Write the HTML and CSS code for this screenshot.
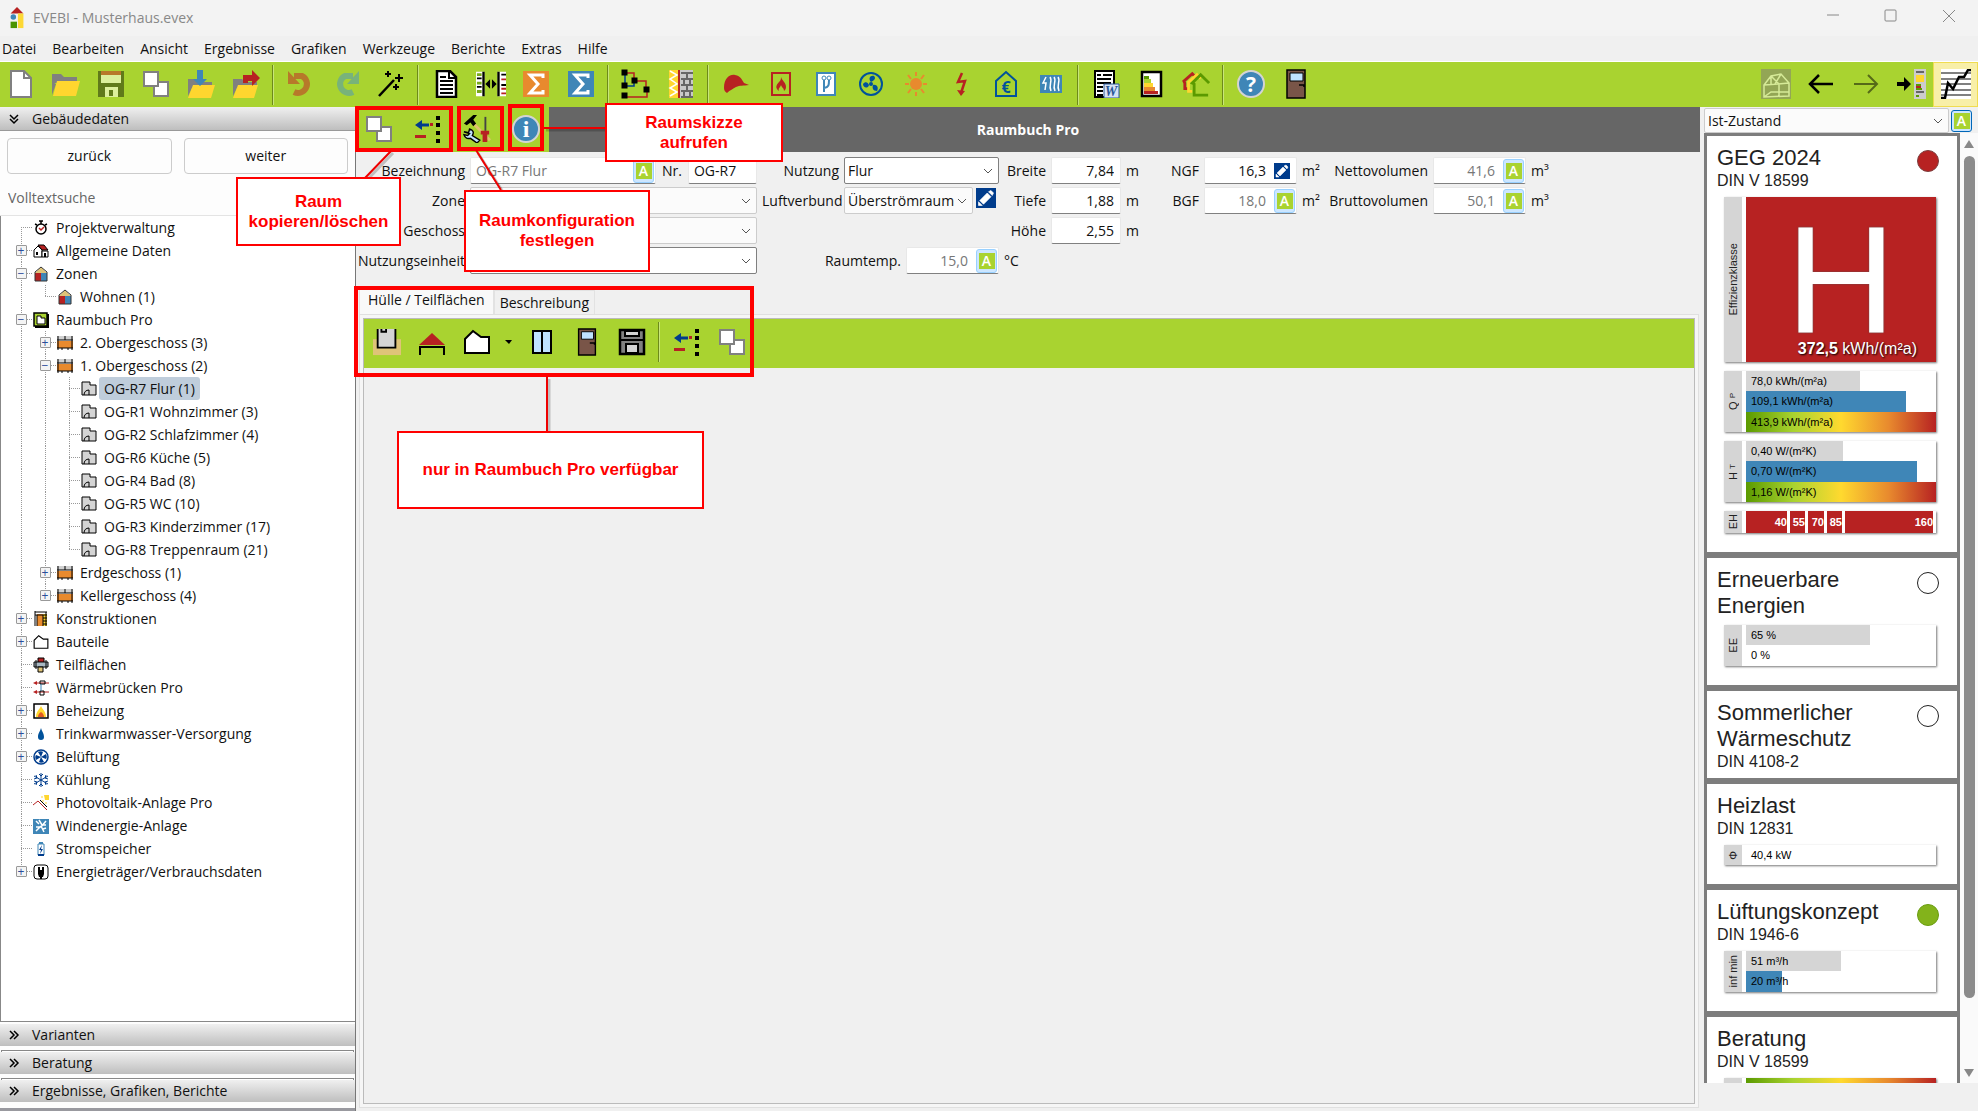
FILE: index.html
```html
<!DOCTYPE html>
<html lang="de">
<head>
    <meta charset="UTF-8">
    <meta name="viewport" content="width=device-width, initial-scale=1.0">
    <title>EVEBI - Musterhaus.evex</title>
    <link rel="stylesheet" href="styles.css">
</head>
<body>
    <!-- Symbole -->
    <svg class="sprite" aria-hidden="true">
        <symbol id="i-app" viewBox="0 0 16 24"><path d="M8 0l7 7H1z" fill="#b72222"/><path d="M9 7h6v16H9z" fill="#fdd835"/><circle cx="4" cy="11" r="3" fill="#3f86b7"/><path d="M1 16h7v7H1z" fill="#4b9400"/></symbol>
        <symbol id="i-new" viewBox="0 0 28 28"><path d="M4 1h13l7 7v19H4z" fill="#fff" stroke="#808080" stroke-width="2"/><path d="M17 1v7h7" fill="none" stroke="#808080" stroke-width="2"/></symbol>
        <symbol id="i-open" viewBox="0 0 28 28"><path d="M0 4h9l3 3h13v6H0z" fill="#808080"/><path d="M0 4v21l4-11h-1z" fill="#808080"/><path d="M5 11h23l-4 15H1z" fill="#ffd62f"/></symbol>
        <symbol id="i-save" viewBox="0 0 28 28"><path d="M1 1h26v26H1z" fill="#607a1a"/><path d="M4 1h20v4H4z" fill="#b7792a"/><path d="M4 5h20v8H4z" fill="#dcef9c"/><path d="M8 17h13v10H8z" fill="#dcef9c"/><path d="M12 20h4v6h-4z" fill="#607a1a"/></symbol>
        <symbol id="i-copy" viewBox="0 0 28 28"><path d="M12 12h14v14H12z" fill="#fff" stroke="#808080" stroke-width="2"/><path d="M2 2h14v14H2z" fill="#fff" stroke="#808080" stroke-width="2"/></symbol>
        <symbol id="i-import" viewBox="0 0 28 28"><path d="M1 9h9l3 3h12v6H1z" fill="#808080"/><path d="M1 9v17l5-10z" fill="#808080"/><path d="M6 15h22l-4 13H1z" fill="#ffd62f"/><path d="M10 0h6v9h4l-7 7-7-7h4z" fill="#3f86b7"/></symbol>
        <symbol id="i-export" viewBox="0 0 28 28"><path d="M1 9h9l3 3h12v6H1z" fill="#808080"/><path d="M1 9v17l5-10z" fill="#808080"/><path d="M6 15h20l-4 13H1z" fill="#ffd62f"/><path d="M11 13V5h9V0l8 8-8 8v-5h-4v2z" fill="#b72222"/></symbol>
        <symbol id="i-undo" viewBox="0 0 28 28"><path d="M7 6h8a8 8 0 1 1-8 16" fill="none" stroke="#b7792a" stroke-width="6"/><path d="M1 1v13h12z" fill="#b7792a"/></symbol>
        <symbol id="i-redo" viewBox="0 0 28 28"><path d="M21 6h-8a8 8 0 1 0 8 16" fill="none" stroke="#78b37a" stroke-width="6"/><path d="M27 1v13H15z" fill="#78b37a"/></symbol>
        <symbol id="i-wand" viewBox="0 0 28 28"><path d="M2 26L17 10" stroke="#000" stroke-width="2.5"/><path d="M11 1v6M8 4h6M22 4v8M18 8h8M19 14v6M16 17h6" stroke="#000" stroke-width="2"/></symbol>
        <symbol id="i-doc" viewBox="0 0 28 28"><path d="M5 1h13l6 6v20H5z" fill="#fff" stroke="#000" stroke-width="2.5"/><path d="M17 1v7h7M8 7h6M8 11h13M8 15h13M8 19h13M8 23h13" fill="none" stroke="#000" stroke-width="2"/></symbol>
        <symbol id="i-compare" viewBox="0 0 32 28"><path d="M0 1h9v26H0zM23 1h9v26h-9z" fill="#fff"/><path d="M8 1v26M24 1v26" stroke="#000" stroke-width="2.5"/><path d="M1 4h5M1 13h5M1 22h5" stroke="#78a81c" stroke-width="3"/><path d="M1 8h5M1 17h5M27 4h5M27 15h5" stroke="#000" stroke-width="2"/><path d="M27 9h5M27 19h5M27 24h5" stroke="#b72222" stroke-width="2"/><path d="M15 9v10l-5-5zM17 9v10l5-5z"/></symbol>
        <symbol id="i-sum-o" viewBox="0 0 28 28"><path d="M1 1h26v26H1z" fill="#e88a2e"/><path d="M21 8V5H8l8 9-8 9h13v-3" fill="none" stroke="#fff" stroke-width="3"/></symbol>
        <symbol id="i-sum-b" viewBox="0 0 28 28"><path d="M1 1h26v26H1z" fill="#3f86b7"/><path d="M21 8V5H8l8 9-8 9h13v-3" fill="none" stroke="#fff" stroke-width="3"/></symbol>
        <symbol id="i-tree" viewBox="0 0 30 30"><path d="M6 4h7v8h12v8" fill="none" stroke="#b72222" stroke-width="1.5"/><path d="M4 5v10M6 17h7v-4" fill="none" stroke="#003c8c" stroke-width="1.5"/><path d="M5 28h21v-6" fill="none" stroke="#b72222" stroke-width="1.5"/><g fill="#fff" stroke="#000" stroke-width="3"><path d="M2 2h3v3H2zM2 15h3v3H2zM2 25h3v3H2zM12 10h3v3h-3zM24 19h3v3h-3z"/></g></symbol>
        <symbol id="i-wall" viewBox="0 0 24 28"><path d="M0 0h24v28H0z" fill="#c9c9c9"/><path d="M0 0h9v28H0z" fill="#ffd62f"/><path d="M1 1l7 4-7 4 7 5-7 4 7 4-7 4" fill="none" stroke="#fff" stroke-width="1.5"/><path d="M10 0v28" stroke="#b72222" stroke-width="2"/><path d="M12 3h12M12 9h12M12 15h12M12 21h12M12 27h12M18 3v6M15 9v6M21 9v6M18 15v6M15 21v6M21 21v6" stroke="#666" stroke-width="2"/></symbol>
        <symbol id="i-cap" viewBox="0 0 28 28"><path d="M2 18C2 8 8 4 13 5c6 1 7 5 9 8l5 2c-6 1-9 0-13 2-3 2-6 3-9 6-2-1-3-3-3-5z" fill="#b72222"/></symbol>
        <symbol id="i-fire" viewBox="0 0 28 28"><path d="M5 3h18v22H5z" fill="none" stroke="#b72222" stroke-width="2"/><path d="M14 7c1 4 5 5 5 10 0 2-1 3-2 4 0-3-2-3-3-6-1 3-3 3-2 6-4-3-3-6 0-9 2-2 2-3 2-5z" fill="#b72222"/></symbol>
        <symbol id="i-pipe" viewBox="0 0 28 28"><path d="M5 3h18v22H5z" fill="#fff" stroke="#3f86b7" stroke-width="2"/><path d="M12 22V10M12 18c5-1 5-3 5-8" fill="none" stroke="#3f86b7" stroke-width="2"/><circle cx="12" cy="8" r="2" fill="#fff" stroke="#3f86b7"/><circle cx="17" cy="8" r="2" fill="#fff" stroke="#3f86b7"/></symbol>
        <symbol id="i-fan" viewBox="0 0 28 28"><circle cx="14" cy="14" r="11" fill="none" stroke="#00529b" stroke-width="2"/><circle cx="14" cy="14" r="2" fill="#00529b"/><path d="M14 12c-3-3-1-7 3-6 2 2 1 4-3 6zM12 15c-1 4-6 3-6-1 2-3 5-2 6 1zM16 15c4-1 6 3 4 6-4 0-5-3-4-6z" fill="#00529b"/></symbol>
        <symbol id="i-sun" viewBox="0 0 28 28"><circle cx="14" cy="14" r="6" fill="#e88a2e"/><path d="M14 2v4M14 22v4M3 14h4M21 14h4M6 5l3 4M22 5l-3 4M6 23l3-4M22 23l-3-4" stroke="#e88a2e" stroke-width="2"/></symbol>
        <symbol id="i-bolt" viewBox="0 0 28 28"><path d="M15 3l-4 9 7-1-4 12" fill="none" stroke="#b72222" stroke-width="2.5"/><path d="M10 20l8 1-4 5z" fill="#b72222"/></symbol>
        <symbol id="i-heater" viewBox="0 0 28 28"><path d="M3 5h22v18H3z" fill="#3f86b7"/><path d="M9 7l-3 6h3l-1 7M13 7c3 4-2 8 1 14M17 7c3 4-2 8 1 14M21 7c3 4-2 8 1 14" fill="none" stroke="#fff" stroke-width="1.5"/></symbol>
        <symbol id="i-energy" viewBox="0 0 28 28"><path d="M5 2h19v24H5z" fill="#fff" stroke="#000" stroke-width="2.5"/><path d="M7 6h5v3H7z" fill="#5b9a00"/><path d="M7 9h7v4H7z" fill="#a9d330"/><path d="M7 13h9v4H7z" fill="#ffd62f"/><path d="M7 17h11v4H7z" fill="#e88a2e"/><path d="M7 21h14v3H7z" fill="#b72222"/></symbol>
        <symbol id="i-houses" viewBox="0 0 30 28"><g fill="none" stroke-width="3"><path d="M8 19H3v-6L2 11l9-8 4 4" stroke="#b72222"/><path d="M11 22H7V12l9-8 4 4" stroke="#ffd62f"/><path d="M29 13L20 4l-9 9 2 1v12h15" stroke="#5b9a00"/></g></symbol>
        <symbol id="i-door" viewBox="0 0 28 30"><path d="M5 1h18v28H5z" fill="#795548" stroke="#000" stroke-width="1.5"/><path d="M8 4h13v8H8z" fill="#bfe2ff" stroke="#000"/><path d="M17 16h5v2" fill="none" stroke="#000" stroke-width="1.5"/></symbol>
        <symbol id="i-3d" viewBox="0 0 30 30"><path d="M0 0h30v30H0z" fill="#93a655"/><path d="M3 28V16l7-9 10-2 8 9v13zM3 16l14-1 11-1M10 7l8 8v12M10 7v8M3 28l7-5h18M20 5l-6 10" fill="none" stroke="#d6ea98" stroke-width="1.5"/></symbol>
        <symbol id="i-left" viewBox="0 0 28 28"><path d="M26 14H4M12 5l-9 9 9 9" fill="none" stroke="#000" stroke-width="2.5"/></symbol>
        <symbol id="i-right" viewBox="0 0 28 28"><path d="M2 14h22M16 5l9 9-9 9" fill="none" stroke="#556a18" stroke-width="2"/></symbol>
        <symbol id="i-panel" viewBox="0 0 30 30"><path d="M1 13h7V8l7 7-7 7v-5H1z"/><path d="M18 0h12v30H18z" fill="#ccc"/><path d="M20 2h8v2h-8z" fill="#666"/><path d="M20 6h8v7h-8z" fill="#ffd62f"/><path d="M20 15h5v2h-5zM20 19h6v2h-6zM20 26h3v2h-3z" fill="#5b9a00"/><path d="M20 17h5v2h-5z" fill="#b72222"/><path d="M20 22h8v2h-8z" fill="#666"/></symbol>
        <symbol id="i-chart" viewBox="0 0 30 30"><path d="M0 0h30v30H0z" fill="#fff"/><path d="M0 4h30M0 10h30M0 15h30M0 21h30M0 26h30" stroke="#808080" stroke-width="2"/><path d="M0 29h4l3-15 5 6 6-12h5l4-7h3" fill="none" stroke="#000" stroke-width="2.5"/></symbol>
        <symbol id="i-delete" viewBox="0 0 28 28"><path d="M7 10h8" stroke="#003c8c" stroke-width="3"/><path d="M1 10l7-5v10z" fill="#003c8c"/><path d="M16 8h3v3h-3z" fill="#b72222"/><path d="M1 20h11v3H1z" fill="#b72222"/><path d="M22 1h4v4h-4zM22 8h4v4h-4zM22 16h4v4h-4zM22 24h4v4h-4z"/></symbol>
        <symbol id="i-tools" viewBox="0 0 30 30"><path d="M10 8l19 19" stroke="#e0c070" stroke-width="3"/><path d="M1 9l10-9h4l-4 5 3 4-3 3-3-4-4 3z"/><path d="M24 2v15" stroke="#444" stroke-width="2"/><path d="M19 17h9v4h-2v8h-5v-8h-2z" fill="#b72222"/><path d="M1 18l5 1 1-4c4 1 5 4 3 7l8 5-3 3-7-5c-4 1-6-1-7-4l4 1 2-2z" fill="#bfe2ff" stroke="#000" stroke-width="1.5"/></symbol>
        <symbol id="i-basement" viewBox="0 0 30 30"><path d="M0 12h30v17H0z" fill="#dfc478"/><path d="M5 1h19v20H5z" fill="#d4d4d4"/><path d="M5 1v20h19V1M9 1v3h5V1" fill="none" stroke="#000" stroke-width="2"/></symbol>
        <symbol id="i-roof" viewBox="0 0 28 28"><path d="M14 5l13 12H1z" fill="#b72222"/><path d="M2 27v-8h24v8" fill="none" stroke="#000" stroke-width="2"/></symbol>
        <symbol id="i-outer" viewBox="0 0 28 28"><path d="M2 25V11l8-8 8 6h8v16z" fill="#fff" stroke="#000" stroke-width="2"/></symbol>
        <symbol id="i-window" viewBox="0 0 28 28"><path d="M5 3h18v22H5z" fill="#bfe2ff" stroke="#000" stroke-width="2"/><path d="M14 3v22" stroke="#000" stroke-width="2"/></symbol>
        <symbol id="i-floppy" viewBox="0 0 28 28"><path d="M2 2h24v24H2z" fill="#808080" stroke="#000" stroke-width="2.5"/><path d="M7 3h14v5H7z" fill="#d4d4d4" stroke="#000" stroke-width="2"/><path d="M2 12h24" stroke="#000" stroke-width="2"/><path d="M8 16h12v9H8z" fill="#d4d4d4" stroke="#000" stroke-width="2"/></symbol>

        <symbol id="t-clock" viewBox="0 0 16 16"><circle cx="8" cy="9" r="5" fill="#fff" stroke="#000" stroke-width="1.5"/><path d="M6 1h4M8 1v3M2 4l2 1M14 4l-2 1" stroke="#000" stroke-width="1.5"/><path d="M6 8l2 2 3-3" fill="none" stroke="#b72222" stroke-width="1.5"/></symbol>
        <symbol id="t-house" viewBox="0 0 16 16"><path d="M1 14V7l4-4 4 4v7z" fill="#fff" stroke="#000"/><path d="M5 2h6l4 5H9z" fill="#b72222" stroke="#000"/><path d="M9 14V8h6v6z" fill="#fff" stroke="#000"/><path d="M3 9h2v3H3zM11 10h2v4h-2z"/></symbol>
        <symbol id="t-zone" viewBox="0 0 16 16"><path d="M2 7h6v8H2z" fill="#b72222"/><path d="M8 7h6v8H8z" fill="#3f86b7"/><path d="M2 7l6-6 6 6z" fill="#dfc478"/><path d="M2 15V6l6-5 6 5v9z" fill="none" stroke="#333"/></symbol>
        <symbol id="t-book" viewBox="0 0 16 16"><path d="M2 2h14v14H2z"/><path d="M1 1h13v13H1z" fill="#a9d330" stroke="#000" stroke-width="1.5"/><path d="M4 12V4h4v2h4v6z" fill="#fff" stroke="#000"/></symbol>
        <symbol id="t-floor" viewBox="0 0 16 16"><path d="M0 1h16v4H0z" fill="#d0d0d0"/><path d="M0 6h16v7H0z" fill="#e88a2e"/><path d="M0 5h16M0 13h16M1 1v14M15 1v14M8 1v4M5 13v2M11 13v2" stroke="#000" fill="none"/></symbol>
        <symbol id="t-room" viewBox="0 0 16 16"><path d="M1 14V1h8v3h6v10z" fill="#d4d4d4" stroke="#000"/><path d="M3 14c0-3 2-5 5-5v5" fill="none" stroke="#000"/></symbol>
        <symbol id="t-constr" viewBox="0 0 16 16"><path d="M4 3h6v12H4z" fill="#e88a2e"/><path d="M10 3h4v12h-4z" fill="#ffd62f"/><path d="M2 1h12M2 0v15M4 4v11M10 4v11M13 1v14M2 4h12M10 7h4M10 10h4M10 13h4" stroke="#000" fill="none"/></symbol>
        <symbol id="t-area" viewBox="0 0 16 16"><path d="M5 1h6v5H5z" fill="#b72222" stroke="#000"/><path d="M1 5h14v5H1z" fill="#a9b9c4" stroke="#000"/><path d="M3 3v9M13 3v9" stroke="#000"/><path d="M5 10h5v5H5z" fill="#dfc478" stroke="#000"/></symbol>
        <symbol id="t-bridge" viewBox="0 0 16 16"><path d="M2 3h14M2 12h14" stroke="#b72222"/><path d="M0 3l4-2v4zM0 12l4-2v4z" fill="#b72222"/><path d="M7 1h5v3H7zM7 11h4v4H7z" fill="none" stroke="#000"/><path d="M8 4v7" stroke="#3f86b7"/></symbol>
        <symbol id="t-heat" viewBox="0 0 16 16"><path d="M1 1h14v14H1z" fill="#fff" stroke="#000" stroke-width="1.5"/><path d="M8 3c1 3 5 5 5 11H3c0-6 4-8 5-11z" fill="#ffd62f"/><path d="M8 9c2 1 3 3 3 5H5c0-2 1-4 3-5z" fill="#e05a20"/></symbol>
        <symbol id="t-drop" viewBox="0 0 16 16"><path d="M8 2c1 4 3 5 3 9a3 3 0 0 1-6 0c0-4 2-5 3-9z" fill="#00529b"/></symbol>
        <symbol id="t-fan" viewBox="0 0 16 16"><circle cx="8" cy="8" r="7" fill="#fff" stroke="#003c8c" stroke-width="1.5"/><path d="M8 8L5 3c2-1 4-1 5 0zM8 8l5-3c1 2 1 4 0 5zM8 8l3 5c-2 1-4 1-5 0zM8 8l-5 3c-1-2-1-4 0-5z" fill="#003c8c"/></symbol>
        <symbol id="t-snow" viewBox="0 0 16 16"><path d="M8 1v14M1 4l14 8M15 4L1 12M6 2l2 2 2-2M6 14l2-2 2 2M1 7l3-1-1-3M15 7l-3-1 1-3M1 9l3 1-1 3M15 9l-3 1 1 3" fill="none" stroke="#003c8c"/></symbol>
        <symbol id="t-pv" viewBox="0 0 16 16"><path d="M0 10l5-4 9 9" fill="none" stroke="#b72222"/><path d="M7 5l7 7" stroke="#000"/><path d="M11 0h5v5h-4z" fill="#ffd62f"/><path d="M8 2h2M9 6h2M13 7v2" stroke="#ffd62f"/></symbol>
        <symbol id="t-wind" viewBox="0 0 16 16"><path d="M0 1h16v15H0z" fill="#3f86b7"/><path d="M3 3l3 3M6 2l3 5h4M13 3l-5 6H3M8 8l3 6M3 13l5-5M13 10l-3 1" fill="none" stroke="#fff" stroke-width="1.5"/></symbol>
        <symbol id="t-batt" viewBox="0 0 16 16"><path d="M6 1h4v2H6z" fill="#3f86b7"/><path d="M5 3h6v11H5z" fill="#fff" stroke="#3f86b7"/><path d="M9 4L6 9h2l-1 4 3-5H8z" fill="#003c8c"/><path d="M5 13h6v2H5z" fill="#003c8c"/></symbol>
        <symbol id="t-plug" viewBox="0 0 16 16"><rect x="1" y="1" width="14" height="14" rx="3" fill="#fff" stroke="#000"/><path d="M6 3v3M10 3v3M8 11v4" stroke="#000" stroke-width="2"/><path d="M5 6h6v4l-1 3H6l-1-3z"/></symbol>
        <symbol id="s-chev" viewBox="0 0 12 12"><path d="M2 2l4 4-4 4M6 2l4 4-4 4" fill="none" stroke="#000" stroke-width="1.5"/></symbol>
        <symbol id="s-pen" viewBox="0 0 16 16"><path d="M0 0h16v16H0z" fill="#003c8c"/><path d="M3 10l6-6 3 3-6 6zM10 3l2-1 2 2-1 2zM2 11l3 3-3 0z" fill="#fff" stroke="#fff" stroke-width=".5"/></symbol>
    </svg>

    <header class="titlebar">
        <svg class="app-icon"><use href="#i-app"/></svg>
        <span class="app-title">EVEBI - Musterhaus.evex</span>
        <button class="win-btn" aria-label="Minimieren"><svg viewBox="0 0 14 14"><path d="M1 6h12"/></svg></button>
        <button class="win-btn" aria-label="Maximieren"><svg viewBox="0 0 14 14"><rect x="1" y="1" width="11" height="11" rx="1"/></svg></button>
        <button class="win-btn" aria-label="Schließen"><svg viewBox="0 0 14 14"><path d="M1 1l12 12M13 1L1 13"/></svg></button>
    </header>

    <nav class="menubar">
        <a href="#">Datei</a>
        <a href="#">Bearbeiten</a>
        <a href="#">Ansicht</a>
        <a href="#">Ergebnisse</a>
        <a href="#">Grafiken</a>
        <a href="#">Werkzeuge</a>
        <a href="#">Berichte</a>
        <a href="#">Extras</a>
        <a href="#">Hilfe</a>
    </nav>

    <div class="toolbar">
        <button aria-label="Neu"><svg><use href="#i-new"/></svg></button>
        <button aria-label="Öffnen"><svg><use href="#i-open"/></svg></button>
        <button aria-label="Speichern"><svg><use href="#i-save"/></svg></button>
        <button aria-label="Kopieren"><svg><use href="#i-copy"/></svg></button>
        <button aria-label="Importieren"><svg><use href="#i-import"/></svg></button>
        <button aria-label="Exportieren"><svg><use href="#i-export"/></svg></button>
        <span class="sep"></span>
        <button aria-label="Rückgängig"><svg><use href="#i-undo"/></svg></button>
        <button aria-label="Wiederholen"><svg><use href="#i-redo"/></svg></button>
        <button aria-label="Assistent"><svg><use href="#i-wand"/></svg></button>
        <span class="sep"></span>
        <button aria-label="Bericht"><svg><use href="#i-doc"/></svg></button>
        <button aria-label="Vergleich"><svg class="wide"><use href="#i-compare"/></svg></button>
        <button aria-label="Summe Varianten"><svg><use href="#i-sum-o"/></svg></button>
        <button aria-label="Summe"><svg><use href="#i-sum-b"/></svg></button>
        <span class="sep"></span>
        <button aria-label="Schema"><svg class="wide"><use href="#i-tree"/></svg></button>
        <button aria-label="Wandaufbau"><svg><use href="#i-wall"/></svg></button>
        <span class="sep"></span>
        <button aria-label="Sanierung"><svg><use href="#i-cap"/></svg></button>
        <button aria-label="Heizung"><svg><use href="#i-fire"/></svg></button>
        <button aria-label="Rohrnetz"><svg><use href="#i-pipe"/></svg></button>
        <button aria-label="Lüftung"><svg><use href="#i-fan"/></svg></button>
        <button aria-label="Solar"><svg><use href="#i-sun"/></svg></button>
        <button aria-label="Strom"><svg><use href="#i-bolt"/></svg></button>
        <button aria-label="Kosten"><svg viewBox="0 0 28 28"><path d="M4 26V11L14 2l10 9v15z" fill="none" stroke="#00529b" stroke-width="2"/><text x="14" y="23" class="glyph-euro">€</text></svg></button>
        <button aria-label="Heizkörper"><svg><use href="#i-heater"/></svg></button>
        <span class="sep"></span>
        <button aria-label="Word-Bericht"><svg viewBox="0 0 28 28"><path d="M3 1h19v26H3z" fill="#fff" stroke="#000" stroke-width="2"/><path d="M5 5h4M11 5h9M5 9h14M5 13h14M5 17h6M5 21h6M5 25h6" stroke="#000" stroke-width="2"/><path d="M12 14h15v14H12z" fill="#d6e2f5" stroke="#2b5797"/><text x="19" y="26" class="glyph-word">W</text></svg></button>
        <button aria-label="Energieausweis"><svg><use href="#i-energy"/></svg></button>
        <button aria-label="Sanierungsfahrplan"><svg><use href="#i-houses"/></svg></button>
        <span class="sep"></span>
        <button aria-label="Hilfe"><svg viewBox="0 0 28 28"><circle cx="14" cy="14" r="13" fill="#3f86b7" stroke="#d4d4d4" stroke-width="2"/><text x="14" y="22" class="glyph-help">?</text></svg></button>
        <button aria-label="Beenden"><svg class="wide"><use href="#i-door"/></svg></button>
        <span class="spacer"></span>
        <button aria-label="3D-Ansicht"><svg class="wide"><use href="#i-3d"/></svg></button>
        <button aria-label="Zurück"><svg><use href="#i-left"/></svg></button>
        <button aria-label="Vor"><svg><use href="#i-right"/></svg></button>
        <button aria-label="Leiste ausblenden"><svg class="wide"><use href="#i-panel"/></svg></button>
        <button class="active" aria-label="Kennwerte"><svg class="wide"><use href="#i-chart"/></svg></button>
    </div>

    <main class="workspace">
        <aside class="left">
            <button class="section-head open"><svg><use href="#s-chev"/></svg>Gebäudedaten</button>
            <div class="nav-buttons">
                <button>zurück</button>
                <button>weiter</button>
            </div>
            <input class="search" type="search" placeholder="Volltextsuche" aria-label="Volltextsuche">

            <ul class="tree">
                <li><i class="g first"></i><svg><use href="#t-clock"/></svg><a href="#">Projektverwaltung</a></li>
                <li><i class="g tee"><button aria-label="Aufklappen">+</button></i><svg><use href="#t-house"/></svg><a href="#">Allgemeine Daten</a></li>
                <li><i class="g tee"><button aria-label="Zuklappen">−</button></i><svg><use href="#t-zone"/></svg><a href="#">Zonen</a></li>
                <li><i class="g line"></i><i class="g end"></i><svg><use href="#t-zone"/></svg><a href="#">Wohnen (1)</a></li>
                <li><i class="g tee"><button aria-label="Zuklappen">−</button></i><svg><use href="#t-book"/></svg><a href="#">Raumbuch Pro</a></li>
                <li><i class="g line"></i><i class="g tee"><button aria-label="Aufklappen">+</button></i><svg><use href="#t-floor"/></svg><a href="#">2. Obergeschoss (3)</a></li>
                <li><i class="g line"></i><i class="g tee"><button aria-label="Zuklappen">−</button></i><svg><use href="#t-floor"/></svg><a href="#">1. Obergeschoss (2)</a></li>
                <li><i class="g line"></i><i class="g line"></i><i class="g tee"></i><svg><use href="#t-room"/></svg><a href="#" class="selected">OG-R7 Flur (1)</a></li>
                <li><i class="g line"></i><i class="g line"></i><i class="g tee"></i><svg><use href="#t-room"/></svg><a href="#">OG-R1 Wohnzimmer (3)</a></li>
                <li><i class="g line"></i><i class="g line"></i><i class="g tee"></i><svg><use href="#t-room"/></svg><a href="#">OG-R2 Schlafzimmer (4)</a></li>
                <li><i class="g line"></i><i class="g line"></i><i class="g tee"></i><svg><use href="#t-room"/></svg><a href="#">OG-R6 Küche (5)</a></li>
                <li><i class="g line"></i><i class="g line"></i><i class="g tee"></i><svg><use href="#t-room"/></svg><a href="#">OG-R4 Bad (8)</a></li>
                <li><i class="g line"></i><i class="g line"></i><i class="g tee"></i><svg><use href="#t-room"/></svg><a href="#">OG-R5 WC (10)</a></li>
                <li><i class="g line"></i><i class="g line"></i><i class="g tee"></i><svg><use href="#t-room"/></svg><a href="#">OG-R3 Kinderzimmer (17)</a></li>
                <li><i class="g line"></i><i class="g line"></i><i class="g end"></i><svg><use href="#t-room"/></svg><a href="#">OG-R8 Treppenraum (21)</a></li>
                <li><i class="g line"></i><i class="g tee"><button aria-label="Aufklappen">+</button></i><svg><use href="#t-floor"/></svg><a href="#">Erdgeschoss (1)</a></li>
                <li><i class="g line"></i><i class="g end"><button aria-label="Aufklappen">+</button></i><svg><use href="#t-floor"/></svg><a href="#">Kellergeschoss (4)</a></li>
                <li><i class="g tee"><button aria-label="Aufklappen">+</button></i><svg><use href="#t-constr"/></svg><a href="#">Konstruktionen</a></li>
                <li><i class="g tee"><button aria-label="Aufklappen">+</button></i><svg><use href="#i-outer"/></svg><a href="#">Bauteile</a></li>
                <li><i class="g tee"></i><svg><use href="#t-area"/></svg><a href="#">Teilflächen</a></li>
                <li><i class="g tee"></i><svg><use href="#t-bridge"/></svg><a href="#">Wärmebrücken Pro</a></li>
                <li><i class="g tee"><button aria-label="Aufklappen">+</button></i><svg><use href="#t-heat"/></svg><a href="#">Beheizung</a></li>
                <li><i class="g tee"><button aria-label="Aufklappen">+</button></i><svg><use href="#t-drop"/></svg><a href="#">Trinkwarmwasser-Versorgung</a></li>
                <li><i class="g tee"><button aria-label="Aufklappen">+</button></i><svg><use href="#t-fan"/></svg><a href="#">Belüftung</a></li>
                <li><i class="g tee"></i><svg><use href="#t-snow"/></svg><a href="#">Kühlung</a></li>
                <li><i class="g tee"></i><svg><use href="#t-pv"/></svg><a href="#">Photovoltaik-Anlage Pro</a></li>
                <li><i class="g tee"></i><svg><use href="#t-wind"/></svg><a href="#">Windenergie-Anlage</a></li>
                <li><i class="g tee"></i><svg><use href="#t-batt"/></svg><a href="#">Stromspeicher</a></li>
                <li><i class="g end"><button aria-label="Aufklappen">+</button></i><svg><use href="#t-plug"/></svg><a href="#">Energieträger/Verbrauchsdaten</a></li>
            </ul>

            <div class="closed-sections">
                <button class="section-head"><svg><use href="#s-chev"/></svg>Varianten</button>
                <button class="section-head"><svg><use href="#s-chev"/></svg>Beratung</button>
                <button class="section-head"><svg><use href="#s-chev"/></svg>Ergebnisse, Grafiken, Berichte</button>
            </div>
        </aside>

        <section class="center">
            <div class="room-bar">
                <div class="room-tools">
                    <button aria-label="Raum kopieren"><svg><use href="#i-copy"/></svg></button>
                    <button aria-label="Raum löschen"><svg><use href="#i-delete"/></svg></button>
                    <button aria-label="Raumkonfiguration"><svg><use href="#i-tools"/></svg></button>
                    <button aria-label="Raumskizze"><svg viewBox="0 0 28 28"><circle cx="14" cy="14" r="13" fill="#3f86b7" stroke="#d4d4d4" stroke-width="2"/><text x="14" y="22" class="glyph-info">i</text></svg></button>
                </div>
                <h1>Raumbuch Pro</h1>
                <div class="room-fill"></div>
            </div>

            <form class="room-form">
                <label for="bez">Bezeichnung</label>
                <div class="name-row">
                    <div class="field auto name"><input id="bez" value="OG-R7 Flur"><button type="button" class="auto-btn"><span>A</span></button></div>
                    <label for="nr">Nr.</label>
                    <div class="field"><input id="nr" value="OG-R7"></div>
                </div>
                <label for="nutzung">Nutzung</label>
                <select id="nutzung" class="strong"><option>Flur</option></select>
                <label for="breite">Breite</label>
                <div class="field num"><input id="breite" value="7,84"></div>
                <span>m</span>
                <label for="ngf">NGF</label>
                <div class="field num"><input id="ngf" value="16,3"><button type="button" class="pen-btn" aria-label="Bearbeiten"><svg><use href="#s-pen"/></svg></button></div>
                <span>m²</span>
                <label for="netto">Nettovolumen</label>
                <div class="field num auto"><input id="netto" value="41,6"><button type="button" class="auto-btn"><span>A</span></button></div>
                <span>m³</span>

                <label for="zone">Zone</label>
                <select id="zone"><option></option></select>
                <label for="luft">Luftverbund</label>
                <div class="luft-row">
                    <select id="luft"><option>Überströmraum</option></select>
                    <button type="button" class="pen-btn big" aria-label="Bearbeiten"><svg><use href="#s-pen"/></svg></button>
                </div>
                <label for="tiefe">Tiefe</label>
                <div class="field num"><input id="tiefe" value="1,88"></div>
                <span>m</span>
                <label for="bgf">BGF</label>
                <div class="field num auto"><input id="bgf" value="18,0"><button type="button" class="auto-btn"><span>A</span></button></div>
                <span>m²</span>
                <label for="brutto">Bruttovolumen</label>
                <div class="field num auto"><input id="brutto" value="50,1"><button type="button" class="auto-btn"><span>A</span></button></div>
                <span>m³</span>

                <label for="geschoss">Geschoss</label>
                <select id="geschoss"><option></option></select>
                <label for="hoehe" class="height-label">Höhe</label>
                <div class="field num"><input id="hoehe" value="2,55"></div>
                <span>m</span>

                <label for="einheit" class="unit-label">Nutzungseinheit</label>
                <select id="einheit" class="strong"><option></option></select>
                <div class="temp-row">
                    <label for="temp">Raumtemp.</label>
                    <div class="field num auto"><input id="temp" value="15,0"><button type="button" class="auto-btn"><span>A</span></button></div>
                </div>
                <span>°C</span>
            </form>

            <div class="tabs">
                <button class="tab current">Hülle / Teilflächen</button>
                <button class="tab">Beschreibung</button>
            </div>
            <div class="tab-pane">
                <div class="tab-inner">
                    <div class="part-tools">
                        <button aria-label="Keller"><svg><use href="#i-basement"/></svg></button>
                        <button aria-label="Dach"><svg><use href="#i-roof"/></svg></button>
                        <button aria-label="Außenwand"><svg><use href="#i-outer"/></svg></button>
                        <button class="drop" aria-label="Weitere"><svg viewBox="0 0 8 8"><path d="M0 2h7L4 6z"/></svg></button>
                        <button aria-label="Fenster"><svg><use href="#i-window"/></svg></button>
                        <button aria-label="Tür"><svg><use href="#i-door"/></svg></button>
                        <button aria-label="Speichern"><svg><use href="#i-floppy"/></svg></button>
                        <span class="sep"></span>
                        <button aria-label="Löschen"><svg><use href="#i-delete"/></svg></button>
                        <button aria-label="Kopieren"><svg><use href="#i-copy"/></svg></button>
                    </div>
                </div>
            </div>
        </section>

        <aside class="right">
            <div class="state-row">
                <select aria-label="Zustand"><option>Ist-Zustand</option></select>
                <button class="auto-btn framed"><span>A</span></button>
            </div>
            <div class="cards-scroll">
                <div class="cards">
                    <section class="card">
                        <span class="dot red"></span>
                        <h2>GEG 2024</h2>
                        <p>DIN V 18599</p>
                        <div class="meter">
                            <div class="meter-label"><span>Effizienzklasse</span></div>
                            <div class="rating"><strong class="letter">H</strong><div class="rating-value"><b>372,5</b> kWh/(m²a)</div></div>
                        </div>
                        <div class="meter">
                            <div class="meter-label"><span>Q <small>P</small></span></div>
                            <div class="bars">
                                <div class="bar grey" style="width: 60%">78,0 kWh/(m²a)</div>
                                <div class="bar blue" style="width: 84%">109,1 kWh/(m²a)</div>
                                <div class="bar scale">413,9 kWh/(m²a)</div>
                            </div>
                        </div>
                        <div class="meter">
                            <div class="meter-label"><span>H <small>T</small></span></div>
                            <div class="bars">
                                <div class="bar grey" style="width: 51%">0,40 W/(m²K)</div>
                                <div class="bar blue" style="width: 90%">0,70 W/(m²K)</div>
                                <div class="bar scale">1,16 W/(m²K)</div>
                            </div>
                        </div>
                        <div class="meter">
                            <div class="meter-label"><span>EH</span></div>
                            <div class="steps">
                                <b style="flex-grow: 41">40</b><b style="flex-grow: 15">55</b><b style="flex-grow: 16">70</b><b style="flex-grow: 15">85</b><b style="flex-grow: 88">160</b>
                            </div>
                        </div>
                    </section>
                    <section class="card">
                        <span class="dot"></span>
                        <h2>Erneuerbare Energien</h2>
                        <div class="meter">
                            <div class="meter-label"><span>EE</span></div>
                            <div class="bars">
                                <div class="bar grey" style="width: 65%">65 %</div>
                                <div class="bar" style="width: 0%">0 %</div>
                            </div>
                        </div>
                    </section>
                    <section class="card plain">
                        <span class="dot"></span>
                        <h2>Sommerlicher Wärmeschutz</h2>
                        <p>DIN 4108-2</p>
                    </section>
                    <section class="card">
                        <h2>Heizlast</h2>
                        <p>DIN 12831</p>
                        <div class="meter">
                            <div class="meter-label"><span>Φ</span></div>
                            <div class="bars"><div class="bar" style="width: 0%">40,4 kW</div></div>
                        </div>
                    </section>
                    <section class="card">
                        <span class="dot green"></span>
                        <h2>Lüftungskonzept</h2>
                        <p>DIN 1946-6</p>
                        <div class="meter">
                            <div class="meter-label"><span>inf min</span></div>
                            <div class="bars">
                                <div class="bar grey" style="width: 50%">51 m³/h</div>
                                <div class="bar blue" style="width: 19%">20 m³/h</div>
                            </div>
                        </div>
                    </section>
                    <section class="card">
                        <h2>Beratung</h2>
                        <p>DIN V 18599</p>
                        <div class="meter">
                            <div class="meter-label"></div>
                            <div class="bars"><div class="bar scale"></div></div>
                        </div>
                    </section>
                </div>
                <div class="scrollbar">
                    <svg viewBox="0 0 12 10"><path d="M6 1l5 8H1z"/></svg>
                    <div class="thumb"></div>
                    <svg viewBox="0 0 12 10"><path d="M6 9l5-8H1z"/></svg>
                </div>
            </div>
        </aside>
    </main>

    <!-- Hinweise über der Oberfläche -->
    <div class="notes">
        <div class="frame frame-copy"></div>
        <div class="frame frame-config"></div>
        <div class="frame frame-sketch"></div>
        <div class="frame frame-parts"></div>
        <svg class="leaders">
            <path class="shade" d="M393 153L367 180M478 153L503 192M546 130H607M549 379V431"/>
            <path d="M391 151L365 178M476 150L501 190M544 128H605M547 376V431"/>
        </svg>
        <div class="note note-copy">Raum<br>kopieren/löschen</div>
        <div class="note note-config">Raumkonfiguration<br>festlegen</div>
        <div class="note note-sketch">Raumskizze<br>aufrufen</div>
        <div class="note note-parts">nur in Raumbuch Pro verfügbar</div>
    </div>
</body>
</html>
```
FILE: styles.css
```css
* {
    margin: 0;
    padding: 0;
    box-sizing: border-box;
}

body {
    height: 100vh;
    display: flex;
    flex-direction: column;
    overflow: hidden;
    background: #f0f0f0;
    color: #111;
    font-family: "Open Sans", "Segoe UI", sans-serif;
    font-size: 14px;
    line-height: 20px;
}

button, input, select {
    font: inherit;
    color: inherit;
    border: none;
    background: none;
}

a {
    color: inherit;
    text-decoration: none;
}

.sprite {
    position: absolute;
    width: 0;
    height: 0;
}

/* Titelleiste und Menü */
.titlebar {
    display: flex;
    align-items: center;
    height: 36px;
    flex-shrink: 0;
    padding-left: 8px;
    background: #f3f3f3;
    color: #888;
}

.app-icon {
    width: 18px;
    height: 22px;
}

.app-title {
    flex: 1;
    margin-left: 7px;
}

.win-btn {
    width: 58px;
    height: 36px;
}

.win-btn svg {
    width: 14px;
    height: 14px;
    fill: none;
    stroke: #888;
}

.menubar {
    display: flex;
    gap: 16px;
    align-items: center;
    height: 26px;
    flex-shrink: 0;
    padding-left: 2px;
    border-bottom: 1px solid #fff;
}

/* Symbolleisten */
.toolbar {
    display: flex;
    height: 45px;
    flex-shrink: 0;
    margin-left: -2px;
    background: #a9d330;
}

.toolbar button {
    display: flex;
    align-items: center;
    justify-content: center;
    width: 45px;
    flex-shrink: 0;
    padding-bottom: 1px;
}

.toolbar svg {
    width: 28px;
    height: 28px;
}

.toolbar .wide {
    width: 30px;
    height: 30px;
}

.toolbar .active {
    background: #f8efa8;
    border: 1px solid #f0dc50;
}

.glyph-euro, .glyph-word, .glyph-help, .glyph-info {
    font-weight: 700;
    text-anchor: middle;
    fill: #fff;
}

.glyph-euro {
    font-size: 16px;
    fill: #00529b;
}

.glyph-word {
    font-family: "Liberation Serif", serif;
    font-size: 14px;
    font-style: italic;
    fill: #2b5797;
}

.glyph-help {
    font-size: 21px;
}

.glyph-info {
    font-family: "Liberation Serif", serif;
    font-size: 24px;
}

.sep {
    width: 10px;
    flex-shrink: 0;
    background: linear-gradient(90deg, #6d8a1a 50%, #c8e67a 50%) center / 2px 40px no-repeat;
}

.spacer {
    flex: 1;
}

.workspace {
    flex: 1;
    display: flex;
    min-height: 0;
}

/* Linke Spalte */
.left {
    width: 356px;
    flex-shrink: 0;
    display: flex;
    flex-direction: column;
    background: #fdfdfd;
    border-right: 1px solid #777;
}

.section-head {
    display: flex;
    align-items: center;
    gap: 12px;
    width: 100%;
    height: 22px;
    flex-shrink: 0;
    padding-left: 8px;
    background: linear-gradient(#f0f0f0, #bebebe);
    text-align: left;
}

.section-head svg {
    width: 12px;
    height: 12px;
}

.section-head.open {
    height: 24px;
    border-bottom: 1px solid #999;
}

.section-head.open svg {
    transform: rotate(90deg);
}

.nav-buttons {
    display: flex;
    gap: 12px;
    padding: 7px 7px 5px;
}

.nav-buttons button {
    flex: 1;
    height: 36px;
    border: 1px solid #ccc;
    border-radius: 4px;
    background: #fdfdfd;
}

.search {
    height: 37px;
    padding: 0 8px;
    border-bottom: 1px solid #e4e4e4;
}

.search::placeholder {
    color: #666;
    opacity: 1;
}

.tree {
    flex: 1;
    list-style: none;
    padding-left: 8px;
    background: #fff;
    border-left: 1px solid #888;
    border-bottom: 1px solid #888;
}

.tree li {
    display: flex;
    align-items: center;
    height: 23px;
}

.tree li svg {
    width: 16px;
    height: 16px;
}

.tree a {
    margin-left: 2px;
    padding: 1px 5px;
    border-radius: 3px;
    line-height: 21px;
}

.tree .selected {
    background: #bfcddb;
}

/* Verbindungslinien des Baums */
.g {
    --v: repeating-linear-gradient(#999 0 1px, transparent 1px 2px);
    --h: repeating-linear-gradient(90deg, #999 0 1px, transparent 1px 2px);
    display: flex;
    align-items: center;
    justify-content: center;
    width: 24px;
    height: 23px;
    background-repeat: no-repeat;
    font-style: normal;
}

.g.line {
    background-image: var(--v);
    background-size: 1px 100%;
    background-position: 12px 0;
}

.g.tee {
    background-image: var(--v), var(--h);
    background-size: 1px 100%, 11px 1px;
    background-position: 12px 0, 12px 11px;
}

.g.end {
    background-image: var(--v), var(--h);
    background-size: 1px 12px, 11px 1px;
    background-position: 12px 0, 12px 11px;
}

.g.first {
    background-image: var(--v), var(--h);
    background-size: 1px 12px, 11px 1px;
    background-position: 12px 11px, 12px 11px;
}

.g button {
    width: 11px;
    height: 11px;
    border: 1px solid #999;
    border-radius: 1px;
    background: #f4f4f4;
    color: #2a4d9b;
    font-size: 12px;
    line-height: 9px;
}

.closed-sections {
    padding: 2px 0 6px;
    border-bottom: 3px solid #99999f;
}

.closed-sections .section-head + .section-head {
    margin-top: 6px;
    box-shadow: 0 -3px 0 -2px #fff, 0 -3px 0 -1px #888;
}

/* Mitte */
.center {
    flex: 1;
    min-width: 0;
    display: flex;
    flex-direction: column;
}

.room-bar {
    display: flex;
    height: 45px;
    flex-shrink: 0;
    background: #666;
}

.room-tools {
    display: flex;
    align-items: center;
    gap: 21px;
    width: 193px;
    padding: 0 0 2px 9px;
    background: #a9d330;
}

.room-tools button {
    display: flex;
}

.room-tools svg {
    width: 28px;
    height: 28px;
}

.room-bar h1 {
    flex: 1;
    color: #fff;
    font-size: 14px;
    line-height: 45px;
    text-align: center;
}

.room-fill {
    width: 193px;
}

.room-form {
    display: grid;
    grid-template-columns: 109px 287px 77px 155px 42px 70px 16px 52px 93px 22px 99px 93px 22px;
    grid-auto-rows: 27px;
    gap: 3px 5px;
    align-items: center;
    padding-top: 5px;
}

.room-form label {
    text-align: right;
    white-space: nowrap;
}

.room-form .height-label {
    grid-column: 5;
}

.room-form .unit-label {
    grid-column: 1;
}

.name-row, .luft-row, .temp-row {
    display: flex;
    align-items: center;
}

.name-row {
    justify-content: space-between;
}

.name-row .field {
    width: 69px;
}

.name-row .name {
    width: 186px;
}

.luft-row {
    gap: 3px;
}

.temp-row {
    grid-column: 3 / 5;
    justify-content: flex-end;
    gap: 5px;
}

.temp-row .field {
    width: 93px;
}

.field {
    display: flex;
    align-items: center;
    height: 27px;
    padding-right: 1px;
    background: #fff;
    border: 1px solid #e8e8e8;
    border-bottom-color: #808080;
    border-radius: 2px;
}

.field input {
    flex: 1;
    width: 0;
    padding: 0 5px;
}

.field.num input {
    text-align: right;
}

.field.num button {
    margin-left: 3px;
}

.field.auto input {
    color: #777;
}

select {
    width: 100%;
    height: 27px;
    padding: 0 18px 0 3px;
    appearance: none;
    background: #fbfbfb url("data:image/svg+xml,%3Csvg xmlns='http://www.w3.org/2000/svg' width='10' height='6'%3E%3Cpath d='M1 1l4 4 4-4' fill='none' stroke='%23555'/%3E%3C/svg%3E") right 5px center no-repeat;
    border: 1px solid #ccc;
    border-radius: 2px;
}

select.strong {
    background-color: #fff;
    border-color: #808080;
}

.auto-btn {
    display: flex;
    align-items: center;
    justify-content: center;
    width: 21px;
    height: 24px;
    flex-shrink: 0;
    background: #cce6ff;
    border: 1px solid #99d1ff;
    border-radius: 3px;
}

.auto-btn span {
    width: 16px;
    height: 16px;
    background: #a9d330;
    color: #fff;
    font-weight: 600;
    line-height: 16px;
}

.auto-btn.framed {
    height: 22px;
    border-color: #0067b8;
}

.pen-btn {
    display: flex;
    flex-shrink: 0;
    padding-right: 5px;
}

.pen-btn svg {
    width: 16px;
    height: 16px;
}

.pen-btn.big {
    padding: 0 3px 5px 0;
}

.pen-btn.big svg {
    width: 20px;
    height: 20px;
}

.tabs {
    display: flex;
    align-items: flex-end;
    margin: 14px 3px 0;
}

.tab {
    height: 24px;
    padding: 0 5px;
    border: 1px solid #e2e2e2;
    border-bottom: none;
}

.tab.current {
    height: 26px;
    padding: 0 8px 4px;
    background: #f9f9f9;
}

.tab-pane {
    flex: 1;
    margin: 0 1px 3px 3px;
    padding: 3px;
    border: 1px solid #e0e0e0;
    background: #f6f6f6;
}

.tab-inner {
    height: 100%;
    border: 1px solid #bbb;
    background: #f0f0f0;
}

.part-tools {
    display: flex;
    height: 49px;
    padding-bottom: 4px;
    background: #a9d330;
}

.part-tools button {
    display: flex;
    align-items: center;
    justify-content: center;
    width: 45px;
}

.part-tools svg {
    width: 28px;
    height: 28px;
}

.part-tools .drop {
    width: 20px;
}

.part-tools .drop svg {
    width: 8px;
    height: 8px;
}

/* Rechte Spalte */
.right {
    width: 278px;
    flex-shrink: 0;
    display: flex;
    flex-direction: column;
    padding: 0 0 28px 4px;
}

.state-row {
    display: flex;
    align-items: center;
    gap: 2px;
    padding: 1px 6px 0 0;
}

.state-row select {
    height: 25px;
}

.cards-scroll {
    flex: 1;
    min-height: 0;
    display: flex;
    background: #fafafa;
}

.cards {
    display: flex;
    flex-direction: column;
    gap: 6px;
    width: 256px;
    padding: 3px;
    overflow: hidden;
    background: #7d7d7d;
    color: #222;
    font-family: "Liberation Sans", Arial, sans-serif;
}

.card {
    flex-shrink: 0;
    padding: 9px 21px 19px 10px;
    background: #fff;
}

.card.plain {
    padding-bottom: 6px;
}

.card h2 {
    font-size: 22px;
    font-weight: 400;
    line-height: 26px;
}

.card p {
    font-size: 16px;
    line-height: 20px;
}

.dot {
    float: right;
    width: 22px;
    height: 22px;
    margin: 5px -3px 0 24px;
    border: 1px solid #222;
    border-radius: 50%;
}

.dot.red {
    background: #b72222;
    border-color: #7d4040;
}

.dot.green {
    background: #83b31b;
    border-color: #6a9d10;
}

.meter {
    display: flex;
    gap: 4px;
    margin: 6px 0 0 7px;
    background: #fff;
    box-shadow: 1px 1px 2px #777;
    font-size: 11px;
}

.meter + .meter {
    margin-top: 9px;
}

.meter-label {
    display: flex;
    align-items: center;
    justify-content: center;
    width: 18px;
    flex-shrink: 0;
    background: #d5d5d5;
}

.meter-label span {
    writing-mode: vertical-rl;
    transform: rotate(180deg);
    white-space: nowrap;
}

.meter-label small {
    font-size: 8px;
}

.bars {
    flex: 1;
    min-width: 0;
}

.bar {
    height: 20px;
    padding-left: 5px;
    color: #000;
    line-height: 20px;
    white-space: nowrap;
}

.bar:nth-child(2) {
    height: 21px;
}

.bar.grey {
    background: #d5d5d5;
}

.bar.blue {
    background: #3f86b7;
}

.bar.scale {
    background: linear-gradient(90deg, #5b9a00, #a9d330 25%, #ffd92f 50%, #e88a2e 75%, #b72222);
}

.rating {
    flex: 1;
    height: 165px;
    padding-top: 25px;
    background: #b72222;
    color: #fff;
    text-align: center;
}

.letter {
    display: block;
    height: 117px;
    font-size: 152px;
    font-weight: 400;
    line-height: 117px;
    text-shadow: 0 0 2px #555;
}

.rating-value {
    padding-right: 19px;
    font-size: 16px;
    line-height: 20px;
    text-align: right;
    text-shadow: 1px 1px 2px #000;
}

.steps {
    flex: 1;
    display: flex;
    gap: 3px;
    height: 22px;
    padding-right: 3px;
}

.steps b {
    flex-basis: 0;
    min-width: 0;
    background: #b72222;
    color: #fff;
    line-height: 22px;
    text-align: right;
}

.scrollbar {
    display: flex;
    flex-direction: column;
    align-items: center;
    gap: 7px;
    width: 18px;
    padding: 6px 0 5px;
}

.scrollbar svg {
    width: 12px;
    height: 10px;
    fill: #888;
}

.thumb {
    flex: 1;
    width: 11px;
    margin-bottom: 63px;
    border-radius: 6px;
    background: #8b8b8b;
}

/* Rote Markierungen und Hinweistexte */
.notes {
    position: absolute;
    inset: 0;
    pointer-events: none;
}

.leaders {
    position: absolute;
    width: 100%;
    height: 100%;
    fill: none;
    stroke: #e00;
    stroke-width: 2;
}

.leaders .shade {
    stroke: #0003;
    stroke-width: 3;
}

.frame {
    position: absolute;
    border: 4px solid #f00;
}

.frame-copy { left: 355px; top: 106px; width: 98px; height: 46px; }
.frame-config { left: 457px; top: 106px; width: 47px; height: 45px; }
.frame-sketch { left: 508px; top: 104px; width: 36px; height: 47px; }
.frame-parts { left: 354px; top: 286px; width: 400px; height: 91px; }

.note {
    position: absolute;
    display: flex;
    align-items: center;
    justify-content: center;
    border: 2px solid #f00;
    background: #fff;
    color: #f00;
    font-family: "Liberation Sans", Arial, sans-serif;
    font-size: 17px;
    font-weight: 700;
    line-height: 20px;
    text-align: center;
}

.note-copy { left: 236px; top: 177px; width: 165px; height: 69px; }
.note-config { left: 464px; top: 190px; width: 186px; height: 82px; }
.note-sketch { left: 605px; top: 103px; width: 178px; height: 59px; }
.note-parts { left: 397px; top: 431px; width: 307px; height: 78px; }
```
